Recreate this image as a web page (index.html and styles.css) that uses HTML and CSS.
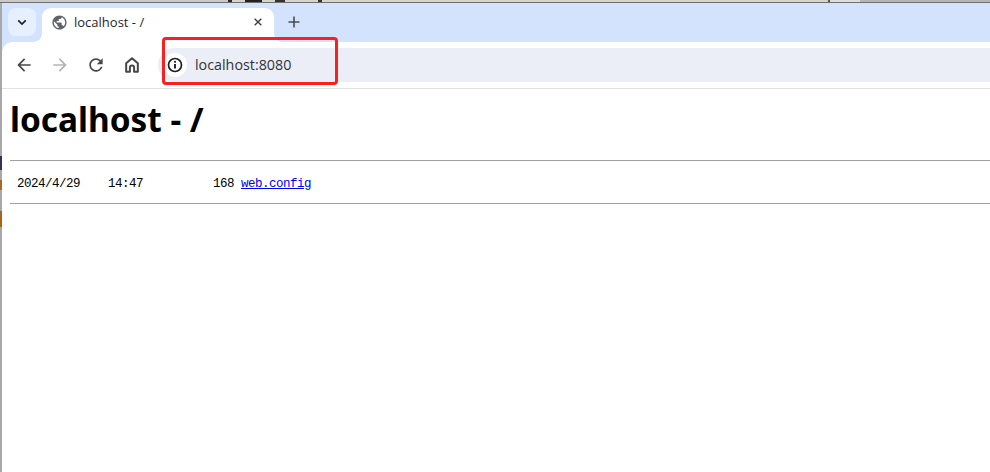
FILE: index.html
```html
<!DOCTYPE html>
<html lang="en">
<head>
<meta charset="utf-8">
<title>localhost - /</title>
<link rel="stylesheet" href="styles.css">
</head>
<body>
<div class="desktop-strip"></div>
<div class="window">
  <div class="tabbar">
    <button class="tab-search" aria-label="Search tabs">
      <svg class="icon-chevron" viewBox="0 0 12 8"><path d="M1.5 1.5 6 6l4.500-4.500" fill="none" stroke="#1f1f1f" stroke-width="2"/></svg>
    </button>
    <div class="tab">
      <svg class="icon-globe" viewBox="0 0 24 24"><path fill="#5f6368" d="M12 2C6.480 2 2 6.480 2 12s4.480 10 10 10 10-4.480 10-10S17.520 2 12 2zm-1 17.930c-3.950-.490-7-3.850-7-7.930 0-.620.080-1.210.210-1.790L9 15v1c0 1.100.900 2 2 2v1.930zm6.900-2.540c-.260-.810-1-1.390-1.900-1.390h-1v-3c0-.550-.450-1-1-1H8v-2h2c.550 0 1-.450 1-1V7h2c1.100 0 2-.900 2-2v-.410c2.930 1.190 5 4.060 5 7.410 0 2.080-.800 3.970-2.100 5.390z"/></svg>
      <span class="tab-title">localhost - /</span>
      <svg class="icon-close" viewBox="0 0 12 12"><path d="M2 2l8 8M10 2l-8 8" stroke="#3c3c3c" stroke-width="1.600" fill="none"/></svg>
    </div>
    <svg class="icon-plus" viewBox="0 0 12 12"><path d="M6 .5v11M.5 6h11" stroke="#4a4d51" stroke-width="1.600" fill="none"/></svg>
  </div>
  <div class="toolbar">
    <svg class="nav-icon" viewBox="0 0 24 24"><path fill="#474747" d="M20 11H7.830l5.590-5.590L12 4l-8 8 8 8 1.410-1.410L7.830 13H20v-2z"/></svg>
    <svg class="nav-icon" viewBox="0 0 24 24"><path fill="#b4b4b4" d="M4 11h12.170l-5.590-5.590L12 4l8 8-8 8-1.410-1.410L16.170 13H4v-2z"/></svg>
    <svg class="nav-icon" viewBox="0 0 24 24"><path fill="#474747" d="M17.650 6.350A7.958 7.958 0 0 0 12 4c-4.420 0-7.990 3.580-7.990 8s3.570 8 7.990 8c3.730 0 6.840-2.550 7.730-6h-2.080A5.990 5.990 0 0 1 12 18c-3.310 0-6-2.690-6-6s2.690-6 6-6c1.660 0 3.140.690 4.220 1.780L13 11h7V4l-2.350 2.350z"/></svg>
    <svg class="nav-icon" viewBox="0 0 24 24"><path fill="none" stroke="#474747" stroke-width="2.400" stroke-linejoin="round" d="M5 20V10l7-6 7 6v10h-4.500v-5a2.500 2.500 0 0 0-5 0v5z"/></svg>
    <div class="omnibox">
      <span class="site-chip">
        <svg class="icon-info" viewBox="0 0 16 16"><circle cx="8" cy="8" r="6.500" fill="none" stroke="#1f1f1f" stroke-width="1.700"/><path d="M8 7v4.500" stroke="#1f1f1f" stroke-width="1.900"/><circle cx="8" cy="4.800" r="1.100" fill="#1f1f1f"/></svg>
      </span>
      <span class="url">localhost:8080</span>
    </div>
  </div>
  <main class="page">
    <h1 class="heading">localhost - /</h1>
    <hr class="rule">
    <pre class="listing"> 2024/4/29    14:47          168 <a href="#" class="file-link">web.config</a></pre>
    <hr class="rule">
  </main>
  <div class="annotation"></div>
</div>
</body>
</html>
```

FILE: styles.css
```css
* { box-sizing: border-box; }
html, body { margin: 0; height: 100%; overflow: hidden; background: #fff; }
body { display: flex; flex-direction: column; }

.desktop-strip {
  height: 3px;
  flex: none;
  background:
    linear-gradient(#0000 2px, #6f6f6f 2px),
    linear-gradient(90deg, #c9c9c9 0 228px, #2a2a2a 228px 232px, #d8d4cc 232px 245px, #222 245px 262px, #d8d4cc 262px 275px, #333 275px 285px, #d8d4cc 285px 318px, #333 318px 322px, #d8d4cc 322px 828px, #555 828px 830px, #ddd 830px 860px, #b4b4b4 860px);
}
.window {
  flex: 1;
  position: relative;
  display: flex;
  flex-direction: column;
  padding-left: 2px;
  background: linear-gradient(#a8a8a8 0 153px, #39305a 153px 167px, #a8a8a8 167px 177px, #a8682a 177px 187px, #a8a8a8 187px 208px, #a5651f 208px 224px, #a8a8a8 224px);
}
.tabbar {
  height: 39px;
  flex: none;
  display: flex;
  align-items: flex-end;
  background: #d3e3fd;
  padding-left: 6px;
}
.tab-search {
  width: 28px;
  height: 28px;
  margin: 0 6px 6px 0;
  border: 0;
  padding: 0;
  border-radius: 8px;
  background: #e6effd;
  display: flex;
  align-items: center;
  justify-content: center;
}
.icon-chevron { width: 10px; height: 7px; }
.tab {
  position: relative;
  width: 232px;
  height: 34px;
  background: #fff;
  border-radius: 9px 9px 0 0;
  display: flex;
  align-items: center;
  padding: 0 11px 6px 9px;
}
.tab::before, .tab::after {
  content: "";
  position: absolute;
  bottom: 0;
  width: 8px;
  height: 8px;
}
.tab::before { left: -8px; background: radial-gradient(circle at 0 0, #0000 7.500px, #fff 8px); }
.tab::after { right: -8px; background: radial-gradient(circle at 100% 0, #0000 7.500px, #fff 8px); }
.icon-globe { width: 17px; height: 17px; flex: none; }
.tab-title {
  flex: 1;
  margin-left: 6px;
  font: 13px "Open Sans", sans-serif;
  color: #1f1f1f;
}
.icon-close { width: 10px; height: 10px; flex: none; }
.icon-plus { width: 12px; height: 12px; margin: 0 0 14px 14px; flex: none; }
.toolbar {
  position: relative;
  height: 47px;
  flex: none;
  display: flex;
  align-items: center;
  gap: 16px;
  padding: 0 0 1px 12px;
  background: #fff;
  border-bottom: 1px solid #e2e2e2;
}
.toolbar::before {
  content: "";
  position: absolute;
  left: 0;
  top: 0;
  width: 10px;
  height: 10px;
  background: radial-gradient(circle at 100% 100%, #0000 9.500px, #d3e3fd 10px);
}
.nav-icon { width: 20px; height: 20px; flex: none; }
.omnibox {
  flex: 1;
  height: 34px;
  display: flex;
  align-items: center;
  gap: 8px;
  padding-left: 5px;
  background: #ebeef7;
  border-radius: 17px 0 0 17px;
}
.site-chip {
  width: 24px;
  height: 24px;
  border-radius: 50%;
  background: #fff;
  display: flex;
  align-items: center;
  justify-content: center;
}
.icon-info { width: 16px; height: 16px; }
.url {
  font: 14.300px "Open Sans", sans-serif;
  color: #303438;
}
.page { flex: 1; padding-left: 8px; overflow: hidden; background: #fff; }
.heading {
  margin: 0;
  height: 71px;
  padding-top: 8px;
  font: bold 33.400px/44px "Noto Sans", sans-serif;
  color: #000;
}
.rule {
  margin: 0;
  border: 0;
  border-top: 1px solid #a0a0a0;
}
.listing {
  margin: 0;
  height: 42px;
  font: 12.500px/46px "Liberation Mono", monospace;
  letter-spacing: -.5px;
  color: #000;
  white-space: pre;
}
.file-link { color: #00e; text-decoration: underline; }
.annotation {
  position: absolute;
  left: 162px;
  top: 34px;
  width: 176px;
  height: 48px;
  border: 3px solid #fa2020;
  border-radius: 4px;
}
```
